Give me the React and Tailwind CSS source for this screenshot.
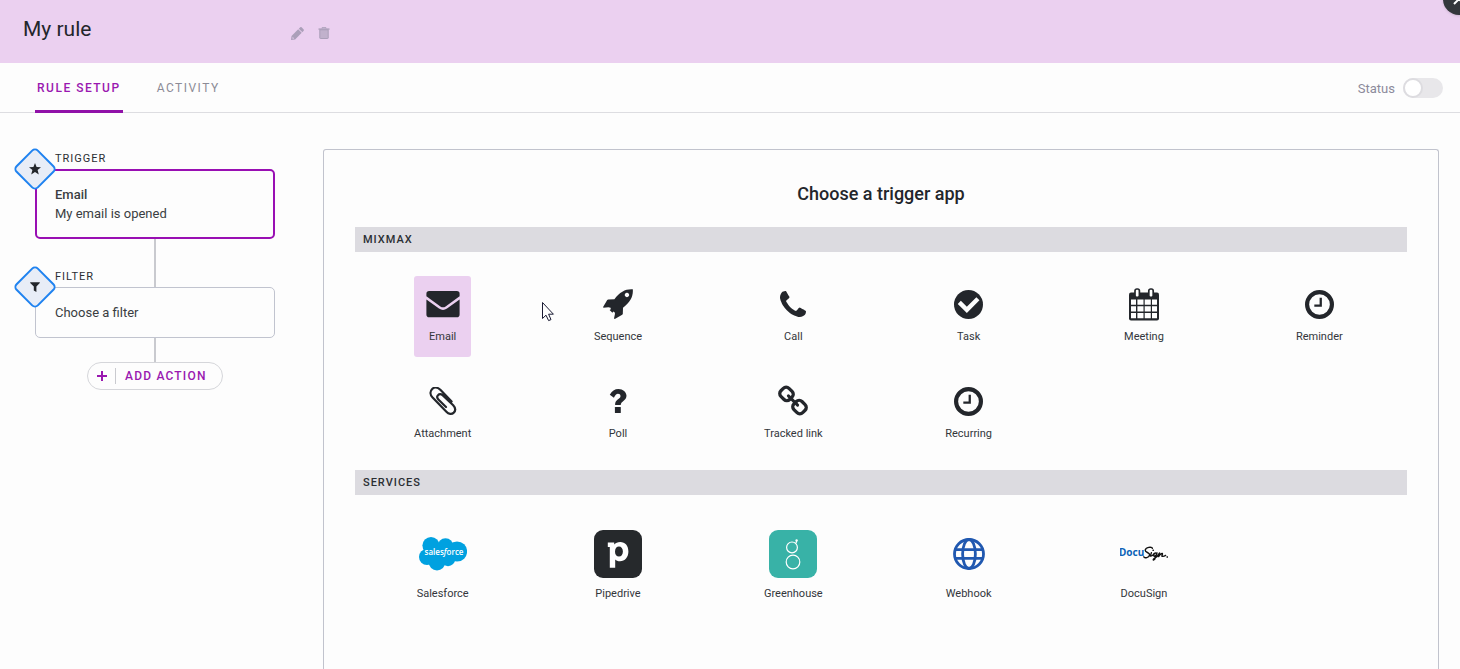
import React, { useState } from "react";

function PencilIcon() {
  return (
    <svg className="h-[13px] w-[13px]" viewBox="0 0 12 12" fill="currentColor" aria-hidden="true">
      <path d="M0 12 L0.5 8.2 L6.6 2.1 L9.9 5.4 L3.8 11.5 Z" />
      <path d="M7.2 1.5 L8.5 0.3 Q9.2 -0.2 9.8 0.3 L11.7 2.2 Q12.2 2.8 11.7 3.5 L10.5 4.8 Z" />
      <path d="M1.5 9.1 L2.9 10.5 L1.4 10.8 Z" fill="#ebd0f0" />
    </svg>
  );
}

function TrashIcon() {
  return (
    <svg className="h-3 w-3" viewBox="0 0 12 12" aria-hidden="true">
      <path d="M4 1.5 V0.7 H8 V1.5" fill="none" stroke="currentColor" strokeWidth="1" />
      <path d="M0.5 1.4 H11.5 V2.8 H0.5 Z" fill="currentColor" />
      <path d="M1.8 2.8 H10.2 V11 Q10.2 11.5 9.6 11.5 H2.4 Q1.8 11.5 1.8 11 Z" fill="currentColor" fillOpacity="0.65" stroke="currentColor" />
    </svg>
  );
}

function StarIcon() {
  return (
    <svg className="h-3 w-3" viewBox="0 0 12 12" fill="currentColor" aria-hidden="true">
      <path d="M6 0 L7.6 4.1 L12 4.3 L8.6 7 L9.8 11.4 L6 9 L2.2 11.4 L3.4 7 L0 4.3 L4.4 4.1 Z" />
    </svg>
  );
}

function FunnelIcon() {
  return (
    <svg className="h-3 w-3" viewBox="0 0 12 12" fill="currentColor" aria-hidden="true">
      <path d="M1.2 1.2 H10.8 V2 L7.4 5.6 V11 L4.8 9.4 V5.6 L1.2 2 Z" />
    </svg>
  );
}

function EnvelopeIcon() {
  return (
    <svg className="h-7 w-9" viewBox="0 0 36 28" fill="currentColor" aria-hidden="true">
      <path d="M1.4 6.2 V3.8 Q1.4 1 4.2 1 H31.8 Q34.6 1 34.6 3.8 V6.2 L20.6 16.4 Q18 18.2 15.4 16.4 Z" />
      <path d="M1.4 9.4 L14 18.6 Q18 21.4 22 18.6 L34.6 9.4 V24.4 Q34.6 27.2 31.8 27.2 H4.2 Q1.4 27.2 1.4 24.4 Z" />
    </svg>
  );
}

function RocketIcon() {
  return (
    <svg className="h-[30px] w-[30px]" viewBox="0 0 30 30" fill="currentColor" aria-hidden="true">
      <path
        fillRule="evenodd"
        d="M29.8 0.3 C22.6 -0.2 17 2.8 11.4 10.2 L5.2 10.4 L4.2 11 L0.1 18 L0.4 18.8 L5.4 18.2 L7.6 18.8 L7.8 20.2 L6.6 21 L9.4 23.8 L10.4 22.6 L11.6 23.2 L12 24.8 L11 29.4 L11.8 30 L19.2 25.8 L19.8 25 L20 18.8 C27.4 13 30.4 7.4 29.8 0.3 Z M24 3.8 A2.2 2.2 0 1 1 23.9 3.8 Z"
      />
    </svg>
  );
}

function PhoneIcon() {
  return (
    <svg className="h-[26px] w-[26px]" viewBox="0 0 1408 1408" fill="currentColor" aria-hidden="true">
      <path d="M1408 1112q0 27-10 70.500t-21 68.500q-21 50-122 106q-94 51-186 51q-27 0-53-3.500t-57.500-12.500t-47-14.500t-55.500-20.500t-49-18q-98-35-175-83q-127-79-264-216t-216-264q-48-77-83-175q-3-9-18-49t-20.500-55.500t-14.500-47t-12.500-57.500t-3.500-53q0-92 51-186q56-101 106-122q25-11 68.500-21t70.500-10q14 0 21 3q18 6 53 76q11 19 30 54t35 63.500t31 53.500q3 4 17.500 25t21.500 35.500t7 28.500q0 20-28.500 50t-62 55t-62 53t-28.500 46q0 9 5 22.500t8.500 20.500t14 24t11.500 19q76 137 174 235t235 174q2 1 19 11.500t24 14t20.500 8.500t22.500 5q18 0 46-28.500t53-62t55-62t50-28.500q14 0 28.500 7t35.500 21.500t25 17.500q25 15 53.500 31t63.500 35t54 30q70 35 76 53q3 7 3 21z" />
    </svg>
  );
}

function CheckCircleIcon() {
  return (
    <svg className="h-[29px] w-[29px]" viewBox="0 0 28 28" aria-hidden="true">
      <circle cx="14" cy="14" r="14" fill="currentColor" />
      <path d="M6.6 13.4 L12.4 19.2 L21.6 10" fill="none" stroke="#fdfdfd" strokeWidth="4.2" strokeLinecap="square" />
    </svg>
  );
}

function CalendarIcon() {
  return (
    <svg className="h-[33px] w-8" viewBox="0 0 32 33" aria-hidden="true">
      <rect x="1" y="4.5" width="30" height="28" rx="2" fill="currentColor" />
      <path
        fill="#fff"
        d="M3 11.600h5v5.200h-5z M9.400 11.600h6.100v5.200h-6.100z M16.700 11.600h6.100v5.200h-6.100z M24 11.600h5v5.200h-5z M3 18.200h5v5.400h-5z M9.400 18.200h6.100v5.400h-6.100z M16.700 18.200h6.100v5.400h-6.100z M24 18.200h5v5.400h-5z M3 25h5v5.200h-5z M9.400 25h6.100v5.200h-6.100z M16.700 25h6.100v5.200h-6.100z M24 25h5v5.200h-5z"
      />
      <rect x="7" y="1" width="4.4" height="8.4" rx="1.8" fill="#fff" stroke="currentColor" strokeWidth="1.7" />
      <rect x="20.8" y="1" width="4.4" height="8.4" rx="1.8" fill="#fff" stroke="currentColor" strokeWidth="1.7" />
    </svg>
  );
}

function ClockIcon() {
  return (
    <svg className="h-[29px] w-[29px]" viewBox="0 0 28 28" fill="none" stroke="currentColor" aria-hidden="true">
      <circle cx="14" cy="14" r="12" strokeWidth="4" />
      <path d="M15.2 7.4 V15 H9" strokeWidth="2.2" />
    </svg>
  );
}

function PaperclipIcon() {
  return (
    <svg className="h-7 w-7" viewBox="0 0 28 28" fill="none" stroke="currentColor" strokeWidth="2.2" strokeLinecap="round" aria-hidden="true">
      <path d="M22.6 14.4 L11.6 3 C8.8 0.2 5.400 -0.2 3.200 2 C0.800 4.400 1 7.800 3.600 10.600 L17.400 24.800 C19.600 27.200 22.800 27.600 24.800 25.600 C26.800 23.400 26.400 20.600 24.200 18.200 L13.600 8.200 C12 6.800 10.200 6.800 9 8.200 C7.800 9.400 8 11 9.400 12.600 L17 20" />
    </svg>
  );
}

function QuestionIcon() {
  return (
    <svg className="h-6 w-[18px]" viewBox="0 0 17 24" fill="currentColor" aria-hidden="true">
      <path d="M0.3 5.800 C2.400 2 5.200 0 9 0 C13.400 0 17 3 17 6.800 C17 11.600 11.400 12.200 11.200 16 H5.600 C5.400 10.200 11 10 11 7.200 C11 5.600 9.900 4.800 8.500 4.800 C6.800 4.800 5.800 6.200 4.400 8.800 Z" />
      <rect x="5.4" y="18" width="5.900" height="6" rx="0.5" />
    </svg>
  );
}

function ChainIcon() {
  return (
    <svg className="h-8 w-8" viewBox="0 0 32 32" fill="none" stroke="currentColor" strokeWidth="3.3" aria-hidden="true">
      <rect x="3.3" y="3.200" width="12.400" height="11.400" rx="4" transform="rotate(45 9.5 8.9)" />
      <rect x="16.3" y="16.400" width="12.400" height="11.400" rx="4" transform="rotate(45 22.5 22.1)" />
      <path d="M11.400 10.900 L20.600 20.100" strokeWidth="3" strokeLinecap="round" />
    </svg>
  );
}

function SalesforceLogo() {
  return (
    <svg className="h-12 w-12" viewBox="0 0 48 48" aria-hidden="true">
      <g fill="#00a1e0">
        <circle cx="12" cy="15.5" r="8.6" />
        <circle cx="26.5" cy="16" r="7.8" />
        <circle cx="38" cy="21.5" r="10.1" />
        <circle cx="8" cy="27" r="8" />
        <circle cx="18" cy="32" r="8.4" />
        <circle cx="29" cy="29" r="7.2" />
        <rect x="9" y="16" width="28" height="14" />
      </g>
      <text x="25" y="25" textAnchor="middle" fontSize="8" fontWeight="600" fill="#fff" fontFamily="Open Sans, sans-serif">
        sales<tspan fontStyle="italic">f</tspan>orce
      </text>
    </svg>
  );
}

function PipedriveLogo() {
  return (
    <svg className="h-12 w-12" viewBox="0 0 48 48" aria-hidden="true">
      <rect width="48" height="48" rx="9" fill="#26292c" />
      <path
        fill="#fff"
        fillRule="evenodd"
        d="M13.8 12.4 H20.2 V14.6 C21.600 12.900 23.600 12 26.200 12 C31.200 12 34.400 15.800 34.400 21.500 C34.400 27.300 30.900 31.200 26 31.200 C23.800 31.200 22.200 30.500 21.200 29.400 V37.800 H15.800 V17 H13.800 Z M25 16.600 C22.700 16.600 21 18.400 21 21.700 C21 24.700 22.600 26.600 25 26.600 C27.300 26.600 28.900 24.700 28.900 21.600 C28.900 18.600 27.300 16.600 25 16.600 Z"
      />
    </svg>
  );
}

function GreenhouseLogo() {
  return (
    <svg className="h-12 w-12" viewBox="0 0 48 48" fill="none" stroke="#fff" strokeWidth="1.2" aria-hidden="true">
      <rect width="48" height="48" rx="9" fill="#38b2a7" stroke="none" />
      <circle cx="23" cy="17.4" r="5.4" />
      <circle cx="24" cy="32" r="6.8" />
      <path d="M26.6 13.4 Q27.6 12.6 27.6 10.8" />
      <circle cx="27.6" cy="10.4" r="1.2" fill="#fff" stroke="none" />
    </svg>
  );
}

function WebhookLogo() {
  return (
    <svg className="h-8 w-8" viewBox="0 0 32 32" fill="none" stroke="#2058b0" strokeWidth="2.8" aria-hidden="true">
      <circle cx="16" cy="16" r="14.5" />
      <ellipse cx="16" cy="16" rx="6.4" ry="14.5" />
      <path d="M2.6 11.6 H29.4 M2.6 20.4 H29.4" />
    </svg>
  );
}

function DocuSignLogo() {
  return (
    <svg className="h-12 w-12" viewBox="0 0 48 48" aria-hidden="true">
      <text x="-1" y="26" fontSize="10" fontWeight="700" fill="#0d64b8" fontFamily="Noto Sans, sans-serif">
        Docu
      </text>
      <g fill="none" stroke="#111" strokeWidth="1.4" strokeLinecap="round" strokeLinejoin="round">
        <path d="M32.400 18.400 C32 16.200 25.600 17.200 25.200 20.200 C25 22.600 29.800 22.400 29.600 24.800 C29.200 27.800 24.400 28.600 23.800 26.800" />
        <path d="M31.400 22.600 L30.400 26 Q32 26.600 34 23.600 C36 22.400 37 23.200 36.600 24.400 C35.400 27 33 26.600 34 24.400 M37 23 L34.600 29.400 C33.200 31 31.600 29.400 37 26.600 L39.600 23 L38.600 26.600 C40.600 23.400 42.800 22.600 42.400 24.200 L41.800 26.200 Q43.600 26.800 45.600 25.400" />
        <path d="M33 20.200 H33.400 M47.200 26.800 V27.200" />
      </g>
    </svg>
  );
}

const mixmaxApps = [
  { name: "Email", icon: <EnvelopeIcon /> },
  { name: "Sequence", icon: <RocketIcon /> },
  { name: "Call", icon: <PhoneIcon /> },
  { name: "Task", icon: <CheckCircleIcon /> },
  { name: "Meeting", icon: <CalendarIcon /> },
  { name: "Reminder", icon: <ClockIcon /> },
  { name: "Attachment", icon: <PaperclipIcon /> },
  { name: "Poll", icon: <QuestionIcon /> },
  { name: "Tracked link", icon: <ChainIcon /> },
  { name: "Recurring", icon: <ClockIcon /> },
];

const serviceApps = [
  { name: "Salesforce", icon: <SalesforceLogo /> },
  { name: "Pipedrive", icon: <PipedriveLogo /> },
  { name: "Greenhouse", icon: <GreenhouseLogo /> },
  { name: "Webhook", icon: <WebhookLogo /> },
  { name: "DocuSign", icon: <DocuSignLogo /> },
];

function SectionHeading({ children }) {
  return (
    <h2 className="bg-[#dcdbe0] px-2 text-[11px] leading-[25px] font-medium tracking-[1px] text-[#2b2e33] uppercase">
      {children}
    </h2>
  );
}

function MixmaxTile({ app, selected, onSelect }) {
  return (
    <button
      type="button"
      aria-pressed={selected}
      onClick={onSelect}
      className={`flex h-[81px] min-w-[57px] flex-col items-center rounded-[3px] pt-3 text-[#23262b] ${selected ? "bg-[#ebd0f0]" : ""}`}
    >
      <span className="flex h-8 items-center justify-center">{app.icon}</span>
      <span className="mt-[9px] text-[11px] leading-4 text-[#33363b]">{app.name}</span>
    </button>
  );
}

function ServiceTile({ app }) {
  return (
    <button type="button" className="flex flex-col items-center text-[#23262b]">
      <span className="flex h-12 items-center justify-center">{app.icon}</span>
      <span className="mt-2 text-[11px] leading-4 text-[#33363b]">{app.name}</span>
    </button>
  );
}

function StepBadge({ children }) {
  return (
    <span className="absolute -top-4 -left-4 flex h-8 w-8 items-center justify-center">
      <span className="absolute inset-0 rotate-45 rounded-[5px] border-2 border-[#2083f0] bg-[#e8edf7]" />
      <span className="relative text-[#23262b]">{children}</span>
    </span>
  );
}

function Step({ label, icon, active, children }) {
  return (
    <section>
      <h2 className="pl-5 text-[11px] leading-4 tracking-[1px] text-[#2b2e33] uppercase">{label}</h2>
      <div className="relative mt-[2px]">
        <button
          type="button"
          className={`block w-full rounded-[5px] text-left text-[13px] leading-[19px] text-[#3a3d42] ${
            active ? "border-2 border-[#990fb3] px-[18px] py-[14px]" : "border border-[#c1c4cf] px-[19px] py-[15px]"
          }`}
        >
          {children}
        </button>
        <StepBadge>{icon}</StepBadge>
      </div>
    </section>
  );
}

function Connector({ className }) {
  return <div className={`mx-auto w-[2px] bg-[#c9cacf] ${className}`} />;
}

export default function App() {
  const [selected, setSelected] = useState("Email");
  const [enabled, setEnabled] = useState(false);

  return (
    <div className="flex h-screen flex-col overflow-hidden bg-[#fdfdfd] font-['Roboto',sans-serif] text-[#23262b]">
      <header className="relative flex h-[63px] shrink-0 items-center bg-[#ebd0f0] pl-[23px]">
        <h1 className="w-[268px] pb-[6px] text-[21px] leading-7">My rule</h1>
        <div className="flex gap-[14px] pt-[3px] text-[#ab9fb9]">
          <button type="button" aria-label="Rename rule"><PencilIcon /></button>
          <button type="button" aria-label="Delete rule"><TrashIcon /></button>
        </div>
        <button
          type="button"
          aria-label="Close"
          className="absolute -top-[17px] -right-[15px] flex h-8 w-8 items-center justify-center rounded-full bg-[#34373c] text-white shadow"
        >
          <svg className="h-3 w-3" viewBox="0 0 12 12" fill="none" stroke="currentColor" strokeWidth="2" aria-hidden="true">
            <path d="M1 1 L11 11 M11 1 L1 11" />
          </svg>
        </button>
      </header>

      <div className="flex h-[50px] shrink-0 items-stretch justify-between border-b border-[#dddde1] pr-[17px] pl-[35px]">
        <nav className="flex gap-[34px] text-[12px] leading-4 tracking-[1.5px]">
          <a href="#setup" className="-mb-px flex items-center border-b-[3px] border-[#9011a8] px-[2px] pt-[2px] font-medium text-[#9a18b0]">
            RULE SETUP
          </a>
          <a href="#activity" className="flex items-center text-[#8c8b96]">ACTIVITY</a>
        </nav>
        <label className="flex items-center gap-2 text-[13px] leading-4 text-[#8c8a9b]">
          <span className="pt-[2px]">Status</span>
          <input type="checkbox" className="peer sr-only" checked={enabled} onChange={() => setEnabled(!enabled)} />
          <span className="flex h-5 w-10 rounded-full bg-[#e8e7ea] peer-checked:justify-end peer-checked:bg-[#9011a8]">
            <span className="h-5 w-5 rounded-full border-2 border-[#dddce0] bg-white" />
          </span>
        </label>
      </div>

      <main className="flex min-h-0 flex-1">
        <aside className="w-[275px] shrink-0 pt-[38px] pl-[35px]">
          <Step label="Trigger" icon={<StarIcon />} active>
            <span className="block font-medium">Email</span>
            <span className="block">My email is opened</span>
          </Step>
          <Connector className="-mb-[18px] h-12" />
          <Step label="Filter" icon={<FunnelIcon />}>
            Choose a filter
          </Step>
          <Connector className="h-6" />
          <button
            type="button"
            className="mx-auto flex h-7 w-[136px] items-center rounded-full border border-[#d5d6da] pl-[9px] text-[12px] leading-4 font-medium tracking-widest text-[#9a18b0]"
          >
            <svg className="h-[10px] w-[10px]" viewBox="0 0 10 10" fill="none" stroke="currentColor" strokeWidth="2" aria-hidden="true">
              <path d="M5 0 V10 M0 5 H10" />
            </svg>
            <span className="mr-[9px] ml-2 h-4 w-px bg-[#c9cacf]" />
            ADD ACTION
          </button>
        </aside>

        <div className="min-w-0 flex-1 pt-9 pr-[21px] pl-12">
          <section className="h-full rounded-t-[3px] border border-b-0 border-[#c1c3cd] px-[31px] pt-8">
            <h2 className="text-center text-[18px] leading-6 font-medium">Choose a trigger app</h2>

            <div className="mt-[21px]">
              <SectionHeading>Mixmax</SectionHeading>
              <div className="mt-6 grid grid-cols-6 justify-items-center gap-y-4">
                {mixmaxApps.map((app) => (
                  <MixmaxTile key={app.name} app={app} selected={selected === app.name} onSelect={() => setSelected(app.name)} />
                ))}
              </div>
            </div>

            <div className="mt-4">
              <SectionHeading>Services</SectionHeading>
              <div className="mt-[35px] grid grid-cols-6 justify-items-center">
                {serviceApps.map((app) => (
                  <ServiceTile key={app.name} app={app} />
                ))}
              </div>
            </div>
          </section>
        </div>
      </main>

      <svg className="pointer-events-none absolute top-[301px] left-[541px] h-[22px] w-[14px]" viewBox="0 0 14 22" fill="#fff" stroke="#1a1b33" aria-hidden="true">
        <path d="M1.5 1.5 V17.5 L5 14.2 L7.6 19.6 L10 18.6 L7.6 13.2 H12.4 Z" />
      </svg>
    </div>
  );
}
